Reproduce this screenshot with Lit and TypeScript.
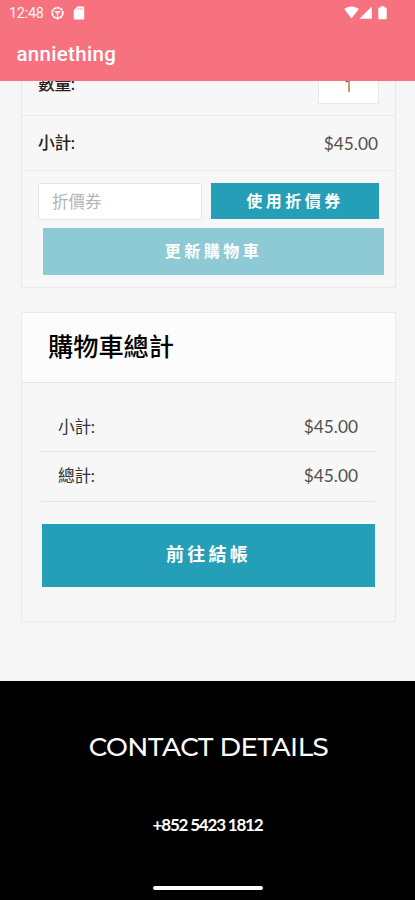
import { LitElement, html, css } from "lit";
import { customElement, property } from "lit/decorators.js";

@customElement("status-bar")
class StatusBar extends LitElement {
  static styles = css`
    :host { display: flex; height: 26px; align-items: center; padding: 0 28px 0 9px; color: #fff; font: 400 14.5px/26px Roboto, sans-serif; }
    .time { width: 42px; padding-top: 1px; white-space: nowrap; letter-spacing: -0.3px; opacity: .92; }
    .right { display: flex; align-items: center; }
    .spacer { flex: 1; }
    svg { display: block; fill: currentColor; }
    .ring { margin-left: 0; }
    .sd { margin-left: 9px; }
    .signal { margin-left: 0; }
    .battery { margin-left: 6px; }
  `;
  render() {
    return html`
      <span class="time">12:48</span>
      <svg class="ring" width="13" height="14" viewBox="0 0 14 14">
        <circle cx="7" cy="7" r="5.7" fill="none" stroke="currentColor" stroke-width="2" stroke-dasharray="3 .6" />
        <path d="M4.200 5.400h5.600M7 7.500v4M4.600 5.600L7 7.800l2.400-2.200" fill="none" stroke="currentColor" stroke-width="1.200" />
      </svg>
      <svg class="sd" width="12" height="14" viewBox="0 0 12 14">
        <path fill-rule="evenodd" d="M4.400.5H10.200a1 1 0 0 1 1 1v11a1 1 0 0 1-1 1H1.800a1 1 0 0 1-1-1V4.200zM4.700 2.300v1.500h.8v-1.500zM6.700 2.300v1.500h.8v-1.500zM8.700 2.300v1.500h.8v-1.500z" />
      </svg>
      <span class="spacer"></span>
      <span class="right">
        <svg width="15" height="14" viewBox="0 0 15 14"><path d="M.2 3C4.300-.4 10.700-.4 14.800 3L7.500 12.600z" /></svg>
        <svg class="signal" width="13" height="14" viewBox="0 0 13 14"><path d="M12.800.6v12.200H.4z" /></svg>
        <svg class="battery" width="9" height="14" viewBox="0 0 9 14"><path d="M2.700.2h3.600v1.300h1.500q.9 0 .9.900v9.900q0 .9-.9.900H1.200q-.9 0-.9-.9V2.400q0-.9.900-.9h1.500z" /></svg>
      </span>
    `;
  }
}

@customElement("price-row")
class PriceRow extends LitElement {
  @property() label = "";
  @property() amount = "";
  static styles = css`
    :host { display: flex; align-items: center; justify-content: space-between; }
    .label { letter-spacing: -0.4px; }
    .amount { padding-top: 1px; font: 400 17.3px/24px Lato, sans-serif; color: #505050; }
  `;
  render() {
    return html`<span class="label">${this.label}</span><span class="amount">${this.amount}</span>`;
  }
}

@customElement("app-root")
class AppRoot extends LitElement {
  static styles = css`
    :host { display: flex; flex-direction: column; height: 900px; overflow: hidden; background: #f6f6f6; color: #333; font: 400 16.8px/24px Lato, "Noto Sans CJK TC", sans-serif; }
    * { box-sizing: border-box; }
    .appbar { height: 81px; flex: none; background: #f6727f; }
    .title { padding-left: 16.5px; height: 55px; color: #fff; font: 500 20.5px/56px Roboto, sans-serif; letter-spacing: 0.3px; }
    .content { height: 600px; flex: none; overflow: hidden; padding: 0 19px 0 21px; }
    .card { border: 1px solid #e9e9e9; background: #f7f7f7; }
    .items { height: 207px; border-top: 0; }
    .quantity { display: flex; justify-content: space-between; height: 35px; border-bottom: 1px solid #e9e9e9; padding: 0 16px; }
    .quantity-label { margin-top: -9px; font-weight: 500; color: #222; letter-spacing: -0.4px; }
    .stepper { width: 61px; height: 43px; margin-top: -20px; padding-top: 13px; border: 1px solid #e9e9e9; background: #fff; text-align: center; font: 300 16px/24px Roboto, sans-serif; color: #444; }
    .line { height: 55px; padding: 0 17px 0 16px; border-bottom: 1px solid #e9e9e9; font-weight: 500; color: #222; }
    .coupon { display: flex; justify-content: space-between; padding: 12px 16px 0 16px; }
    .field { width: 164px; height: 37px; border: 1px solid #e6e6e6; border-radius: 2px; background: #fff; padding-left: 13px; color: #b4b4b4; font-size: 16.5px; line-height: 36px; }
    .button { display: flex; align-items: center; justify-content: center; background: #259fb7; color: #fff; font-weight: 700; font-size: 16px; letter-spacing: 3.5px; }
    .apply { width: 168px; height: 36px; }
    .update { width: 341px; height: 47px; margin: 8px 0 0 21px; padding-bottom: 1px; background: #8ecad6; }
    .totals { margin-top: 24px; height: 310px; }
    .heading { height: 70px; padding-left: 26px; border-bottom: 1px solid #e6e6e6; background: #fcfcfc; color: #000; font-size: 25.2px; font-weight: 500; line-height: 67px; }
    .sums { padding: 19px 20px 0 19px; }
    .sum { height: 50px; padding: 0 17px; border-bottom: 1px solid #e4e4e4; }
    .sum:last-child { padding-bottom: 2px; }
    .checkout { width: 333px; height: 63px; margin: 22px 0 0 20px; padding-bottom: 3px; font-size: 18px; letter-spacing: 3.3px; }
    .footer { flex: 1; display: flex; flex-direction: column; align-items: center; background: #000; color: #fff; }
    .contact { margin-top: 50px; padding-left: 2px; font: 500 26px/32px Montserrat, Lato, sans-serif; white-space: nowrap; letter-spacing: -0.42px; }
    .phone { margin-top: 50px; font: 700 17px/24px Lato, sans-serif; white-space: nowrap; letter-spacing: -1.2px; }
    .home { width: 110px; height: 4px; margin-top: 49px; border-radius: 2px; background: #fff; }
  `;
  render() {
    return html`
      <header class="appbar">
        <status-bar></status-bar>
        <div class="title">anniething</div>
      </header>
      <main class="content">
        <section class="card items">
          <div class="quantity"><span class="quantity-label">數量:</span><div class="stepper">1</div></div>
          <price-row class="line" label="小計:" amount="$45.00"></price-row>
          <div class="coupon"><div class="field">折價券</div><div class="button apply">使用折價券</div></div>
          <div class="button update">更新購物車</div>
        </section>
        <section class="card totals">
          <div class="heading">購物車總計</div>
          <div class="sums">
            <price-row class="sum" label="小計:" amount="$45.00"></price-row>
            <price-row class="sum" label="總計:" amount="$45.00"></price-row>
          </div>
          <div class="button checkout">前往結帳</div>
        </section>
      </main>
      <footer class="footer">
        <div class="contact">CONTACT DETAILS</div>
        <div class="phone">+852 5423 1812</div>
        <div class="home"></div>
      </footer>
    `;
  }
}
